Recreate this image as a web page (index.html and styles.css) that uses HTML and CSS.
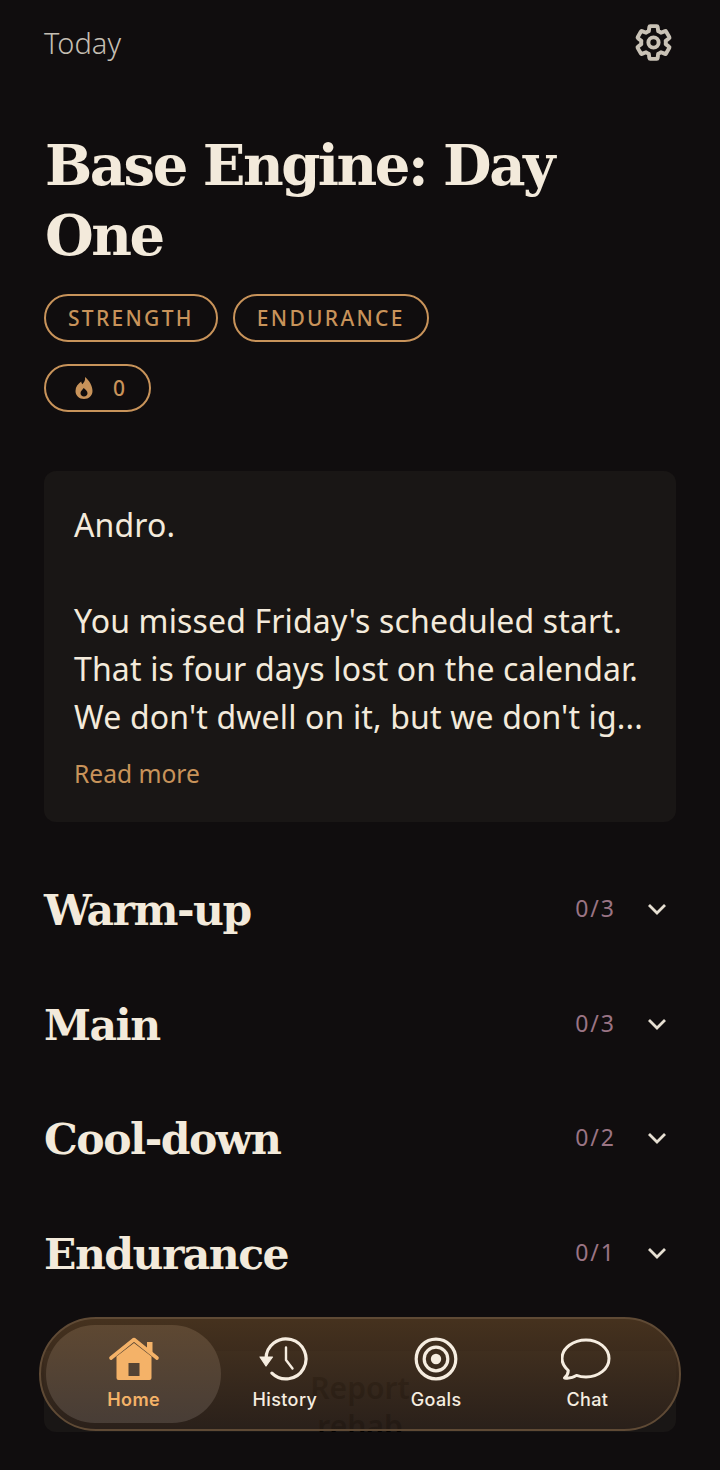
FILE: index.html
```html
<!DOCTYPE html>
<html lang="en">
<head>
    <meta charset="UTF-8">
    <meta name="viewport" content="width=device-width, initial-scale=1.0">
    <title>Today</title>
    <link rel="stylesheet" href="styles.css">
</head>
<body>
    <div class="page">
        <div class="topbar">
            <span class="today">Today</span>
            <svg class="gear" viewBox="0 0 24 24" fill="none" stroke="#c9c2b6" stroke-width="2.300" stroke-linejoin="round">
                <path d="M19.14 12.94c.04-.3.06-.61.06-.94 0-.32-.02-.64-.07-.94l2.03-1.58c.18-.14.23-.41.12-.61l-1.92-3.32c-.12-.22-.37-.29-.59-.22l-2.39.96c-.5-.38-1.03-.7-1.62-.94l-.36-2.54c-.04-.24-.24-.41-.48-.41h-3.84c-.24 0-.43.17-.47.41l-.36 2.54c-.59.24-1.13.57-1.62.94l-2.39-.96c-.22-.08-.47 0-.59.22L2.74 8.87c-.12.21-.08.47.12.61l2.03 1.58c-.05.3-.09.63-.09.94s.02.64.07.94l-2.03 1.58c-.18.14-.23.41-.12.61l1.92 3.32c.12.22.37.29.59.22l2.39-.96c.5.38 1.03.7 1.62.94l.36 2.54c.05.24.24.41.48.41h3.84c.24 0 .44-.17.47-.41l.36-2.54c.59-.24 1.13-.56 1.62-.94l2.39.96c.22.08.47 0 .59-.22l1.92-3.32c.12-.22.07-.47-.12-.61l-2.01-1.58z"/>
                <circle cx="12" cy="12" r="3"/>
            </svg>
        </div>

        <h1 class="title">Base Engine: Day One</h1>

        <div class="tags">
            <span class="tag">STRENGTH</span>
            <span class="tag">ENDURANCE</span>
        </div>
        <div class="tags">
            <span class="tag streak">
                <svg class="flame" viewBox="0 0 20 24" fill="#c8935a">
                    <path fill-rule="evenodd" d="M11 1c.6 3.6-1 5.4-2.6 7.2C7.700 7.500 7.300 6.600 7.200 5.600 4 8 1.500 11 1.500 15c0 4.700 3.700 8 8.500 8s8.500-3.300 8.500-8c0-5.600-3.700-10.800-7.500-14zM10 20.500c-2 0-3.500-1.400-3.500-3.300 0-1.900 1.500-3.200 3.200-5.200 2 1.800 3.800 3.300 3.800 5.200 0 1.900-1.500 3.300-3.500 3.300z"/>
                </svg>
                <span>0</span>
            </span>
        </div>

        <div class="note">
            <p>Andro.</p>
            <p class="blank">&nbsp;</p>
            <p>You missed Friday's scheduled start.</p>
            <p>That is four days lost on the calendar.</p>
            <p>We don't dwell on it, but we don't ig...</p>
            <div class="read-more">Read more</div>
        </div>

        <div class="sections">
            <div class="section">
                <h2>Warm-up</h2>
                <span class="count">0/3</span>
                <svg class="chevron" viewBox="0 0 20 12"><path d="M2 2l8 8 8-8"/></svg>
            </div>
            <div class="section">
                <h2>Main</h2>
                <span class="count">0/3</span>
                <svg class="chevron" viewBox="0 0 20 12"><path d="M2 2l8 8 8-8"/></svg>
            </div>
            <div class="section">
                <h2>Cool-down</h2>
                <span class="count">0/2</span>
                <svg class="chevron" viewBox="0 0 20 12"><path d="M2 2l8 8 8-8"/></svg>
            </div>
            <div class="section">
                <h2>Endurance</h2>
                <span class="count">0/1</span>
                <svg class="chevron" viewBox="0 0 20 12"><path d="M2 2l8 8 8-8"/></svg>
            </div>
        </div>

        <div class="report">Report<br>rehab</div>
    </div>

    <nav class="tabbar">
        <div class="tab active">
            <svg class="tab-icon" viewBox="0 0 52 46">
                <path fill="#f4b268" fill-rule="evenodd" d="M8.500 20.500L26 7l17.500 13.500V42a2 2 0 0 1-2 2h-31a2 2 0 0 1-2-2zM20.500 27v13h11V27z"/>
                <path fill="none" stroke="#f4b268" stroke-width="3.600" stroke-linecap="round" stroke-linejoin="round" d="M3 22L26 3.500 49 22"/>
                <path fill="#f4b268" d="M39 6h5.500v11L39 13z"/>
            </svg>
            <span>Home</span>
        </div>
        <div class="tab">
            <svg class="tab-icon" viewBox="2 0 52 46" fill="none" stroke="#f6ede0" stroke-width="3.200" stroke-linecap="round" stroke-linejoin="round">
                <path d="M9 23a20 20 0 1 1 5.900 14.100"/>
                <path d="M29 11.500V24l6.500 8.500" stroke-width="2.400"/>
                <path d="M3 21h12.500L9 30z" fill="#f6ede0" stroke-width="1.200"/>
            </svg>
            <span>History</span>
        </div>
        <div class="tab">
            <svg class="tab-icon" viewBox="0 0 52 46" fill="none" stroke="#f6ede0" stroke-width="3.200">
                <circle cx="26" cy="23" r="19.800"/>
                <circle cx="26" cy="23" r="11.800"/>
                <circle cx="26" cy="23" r="5.200" fill="#f6ede0" stroke="none"/>
            </svg>
            <span>Goals</span>
        </div>
        <div class="tab">
            <svg class="tab-icon" viewBox="2 -1 52 46" fill="none" stroke="#f6ede0" stroke-width="3" stroke-linejoin="round">
                <path d="M27 3c12.500 0 23 8 23 18.500S39.500 40 27 40c-3.500 0-6.500-.5-9.500-1.600C14.500 40.600 10 41.500 5.500 41c2.500-2 3.700-4.500 3.800-7.500C5.500 30 3 26 3 21.500 3 11 14.500 3 27 3z"/>
            </svg>
            <span>Chat</span>
        </div>
    </nav>
</body>
</html>
```

FILE: styles.css
```css
* {
    padding: 0;
    margin: 0;
    box-sizing: border-box;
}

body {
    background-color: #100d0e;
    font-family: 'Noto Sans', 'Open Sans', sans-serif;
    height: 1470px;
    overflow: hidden;
    position: relative;
}

.page {
    padding: 0 44px;
}

.topbar {
    height: 84px;
    display: flex;
    justify-content: space-between;
    align-items: center;
}

.today {
    font-size: 29px;
    font-weight: 300;
    color: #c4beb3;
}

.gear {
    width: 41px;
    height: 41px;
    margin-right: 2px;
}

.title {
    margin-top: 46px;
    font-family: 'DejaVu Serif', serif;
    font-size: 56px;
    line-height: 70px;
    font-weight: bold;
    color: #f3eadb;
    margin-bottom: 24px;
    max-width: 560px;
    letter-spacing: -2.500px;
    padding-left: 1px;
}

.tags {
    display: flex;
    gap: 15px;
    margin-bottom: 22px;
}

.tag {
    height: 48px;
    padding: 0 22px;
    border: 2px solid #c8935a;
    border-radius: 24px;
    color: #c8935a;
    font-size: 21px;
    font-weight: 500;
    letter-spacing: 2.300px;
    display: flex;
    align-items: center;
}

.streak {
    gap: 19px;
    padding: 0 22px 0 28px;
}

.flame {
    width: 20px;
    height: 24px;
}

.note {
    margin-top: 59px;
    height: 351px;
    background-color: #191615;
    border-radius: 12px;
    padding: 30px;
    color: #f3eadb;
    font-size: 32px;
    letter-spacing: 0.150px;
    line-height: 48px;
}

.read-more {
    margin-top: 14px;
    font-size: 24.600px;
    letter-spacing: 0;
    line-height: 38px;
    color: #c8935a;
}

.sections {
    margin-top: 31px;
}

.section {
    height: 114.500px;
    display: flex;
    align-items: center;
}

.section h2 {
    flex: 1;
    font-family: 'DejaVu Serif', serif;
    font-size: 42.500px;
    font-weight: bold;
    letter-spacing: -1.500px;
    color: #f3eadb;
}

.count {
    font-size: 23px;
    letter-spacing: 2px;
    color: #9a7484;
    margin-right: 31px;
    margin-bottom: 4px;
}

.chevron {
    width: 20px;
    height: 12px;
    margin-right: 9px;
    margin-bottom: 2px;
    fill: none;
    stroke: #e6dfd2;
    stroke-width: 2.800;
}

/* sits behind the tab bar, only shows through it */
.report {
    height: 81px;
    margin-top: 40px;
    padding-top: 18px;
    overflow: hidden;
    background-color: #191615;
    border-radius: 0 0 12px 12px;
    text-align: center;
    font-size: 30px;
    line-height: 38px;
    font-weight: 600;
    color: #000;
}

.tabbar {
    position: absolute;
    left: 39px;
    top: 1317px;
    width: 642px;
    height: 114px;
    padding: 6px 16px 6px 17px;
    border: 2px solid #5f4a35;
    border-radius: 57px;
    background: linear-gradient(180deg, rgba(92, 65, 37, 0.7), rgba(49, 36, 28, 0.7));
    display: grid;
    grid-template-columns: repeat(4, 1fr);
}

.tab {
    display: flex;
    flex-direction: column;
    align-items: center;
    justify-content: center;
    border-radius: 50px;
    color: #f6ede0;
    font-family: 'Inter', sans-serif;
    font-size: 18px;
    font-weight: 500;
    letter-spacing: 0.400px;
    gap: 5px;
    padding-top: 2px;
}

.tab span {
    line-height: 26px;
}

.tab-icon {
    width: 52px;
    height: 46px;
    margin-top: -1px;
}

.active {
    margin: 0 -12px;
    background: linear-gradient(180deg, #5e4832, #483d36);
    color: #f4b268;
    font-weight: 600;
}
```
